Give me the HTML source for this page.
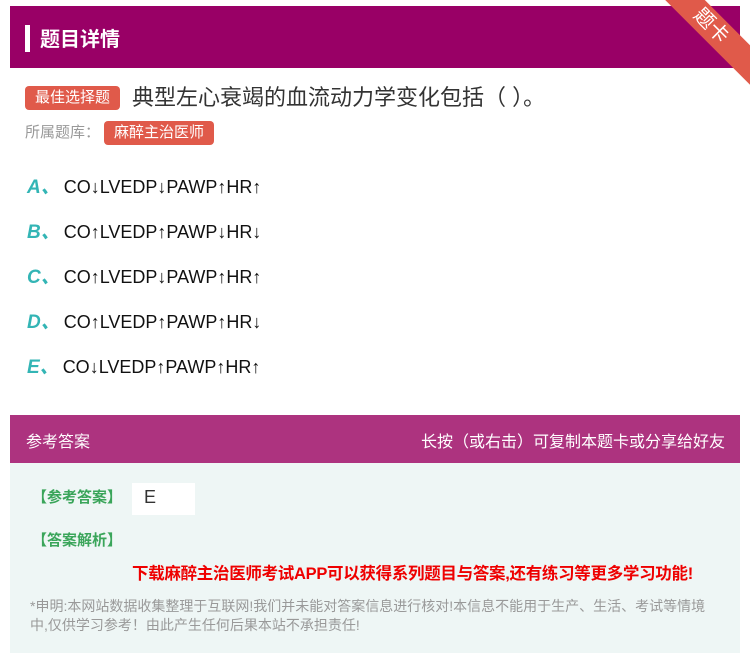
<!DOCTYPE html>
<html><head><meta charset="utf-8"><style>
*{margin:0;padding:0;box-sizing:border-box}
body{width:750px;height:653px;background:#fff;font-family:"Liberation Sans","Noto Sans CJK SC",sans-serif;position:relative;overflow:hidden}
.hdr{position:absolute;left:10px;top:6px;width:730px;height:62px;background:#990066}
.hdr .bar{position:absolute;left:15px;top:19px;width:5px;height:27px;background:#fff}
.hdr .t{position:absolute;left:30px;top:17px;color:#fff;font-size:20px;font-weight:bold}
.rib{position:absolute;right:-36px;top:12px;width:150px;height:28px;background:#e05a4a;transform:rotate(45deg);color:#fff;text-align:center;font-size:20px;line-height:28px}
.tag{display:inline-block;background:#e05a4a;color:#fff;border-radius:4px;font-size:15px;padding:0 10px;height:24px;line-height:24px}
.q{position:absolute;left:25px;top:80px;font-size:22px;color:#333}
.q .tag{vertical-align:3px;margin-right:12px}
.lib{position:absolute;left:25px;top:121px;font-size:15px;color:#999}
.lib .tag{margin-left:4px}
.opt{position:absolute;left:27px;font-size:18px;color:#111}
.opt b{color:#33b5b5;font-style:italic;font-size:19px;margin-right:4px}
.ah{position:absolute;left:10px;top:415px;width:730px;height:48px;background:#ad337f;color:#fff;font-size:16px}
.ab{position:absolute;left:10px;top:463px;width:730px;height:190px;background:#eef6f5}
.g{color:#3aa55a;font-weight:bold;font-size:15px;position:absolute}
</style></head><body>
<div class="hdr"><div class="bar"></div><div class="t">题目详情</div></div>
<div class="rib">题卡</div>
<div class="q"><span class="tag">最佳选择题</span>典型左心衰竭的血流动力学变化包括（ ）。</div>
<div class="lib">所属题库：<span class="tag">麻醉主治医师</span></div>
<div class="opt" style="top:172px"><b>A、</b>CO↓LVEDP↓PAWP↑HR↑</div>
<div class="opt" style="top:217px"><b>B、</b>CO↑LVEDP↑PAWP↓HR↓</div>
<div class="opt" style="top:262px"><b>C、</b>CO↑LVEDP↓PAWP↑HR↑</div>
<div class="opt" style="top:307px"><b>D、</b>CO↑LVEDP↑PAWP↑HR↓</div>
<div class="opt" style="top:352px"><b>E、</b>CO↓LVEDP↑PAWP↑HR↑</div>
<div class="ah"><span style="position:absolute;left:16px;top:13px">参考答案</span><span style="position:absolute;right:15px;top:13px">长按（或右击）可复制本题卡或分享给好友</span></div>
<div class="ab">
<div class="g" style="left:22px;top:23px">【参考答案】</div>
<div style="position:absolute;left:122px;top:20px;width:63px;height:32px;background:#fff;font-size:18px;padding:4px 12px;color:#333">E</div>
<div class="g" style="left:22px;top:66px">【答案解析】</div>
<div style="position:absolute;left:122px;top:97px;color:#e00;font-weight:bold;font-size:16.5px;letter-spacing:-0.3px">下载麻醉主治医师考试APP可以获得系列题目与答案,还有练习等更多学习功能!</div>
<div style="position:absolute;left:20px;top:134px;width:690px;color:#999;font-size:14px;line-height:19px">*申明:本网站数据收集整理于互联网!我们并未能对答案信息进行核对!本信息不能用于生产、生活、考试等情境中,仅供学习参考！由此产生任何后果本站不承担责任!</div>
</div>
</body></html>
